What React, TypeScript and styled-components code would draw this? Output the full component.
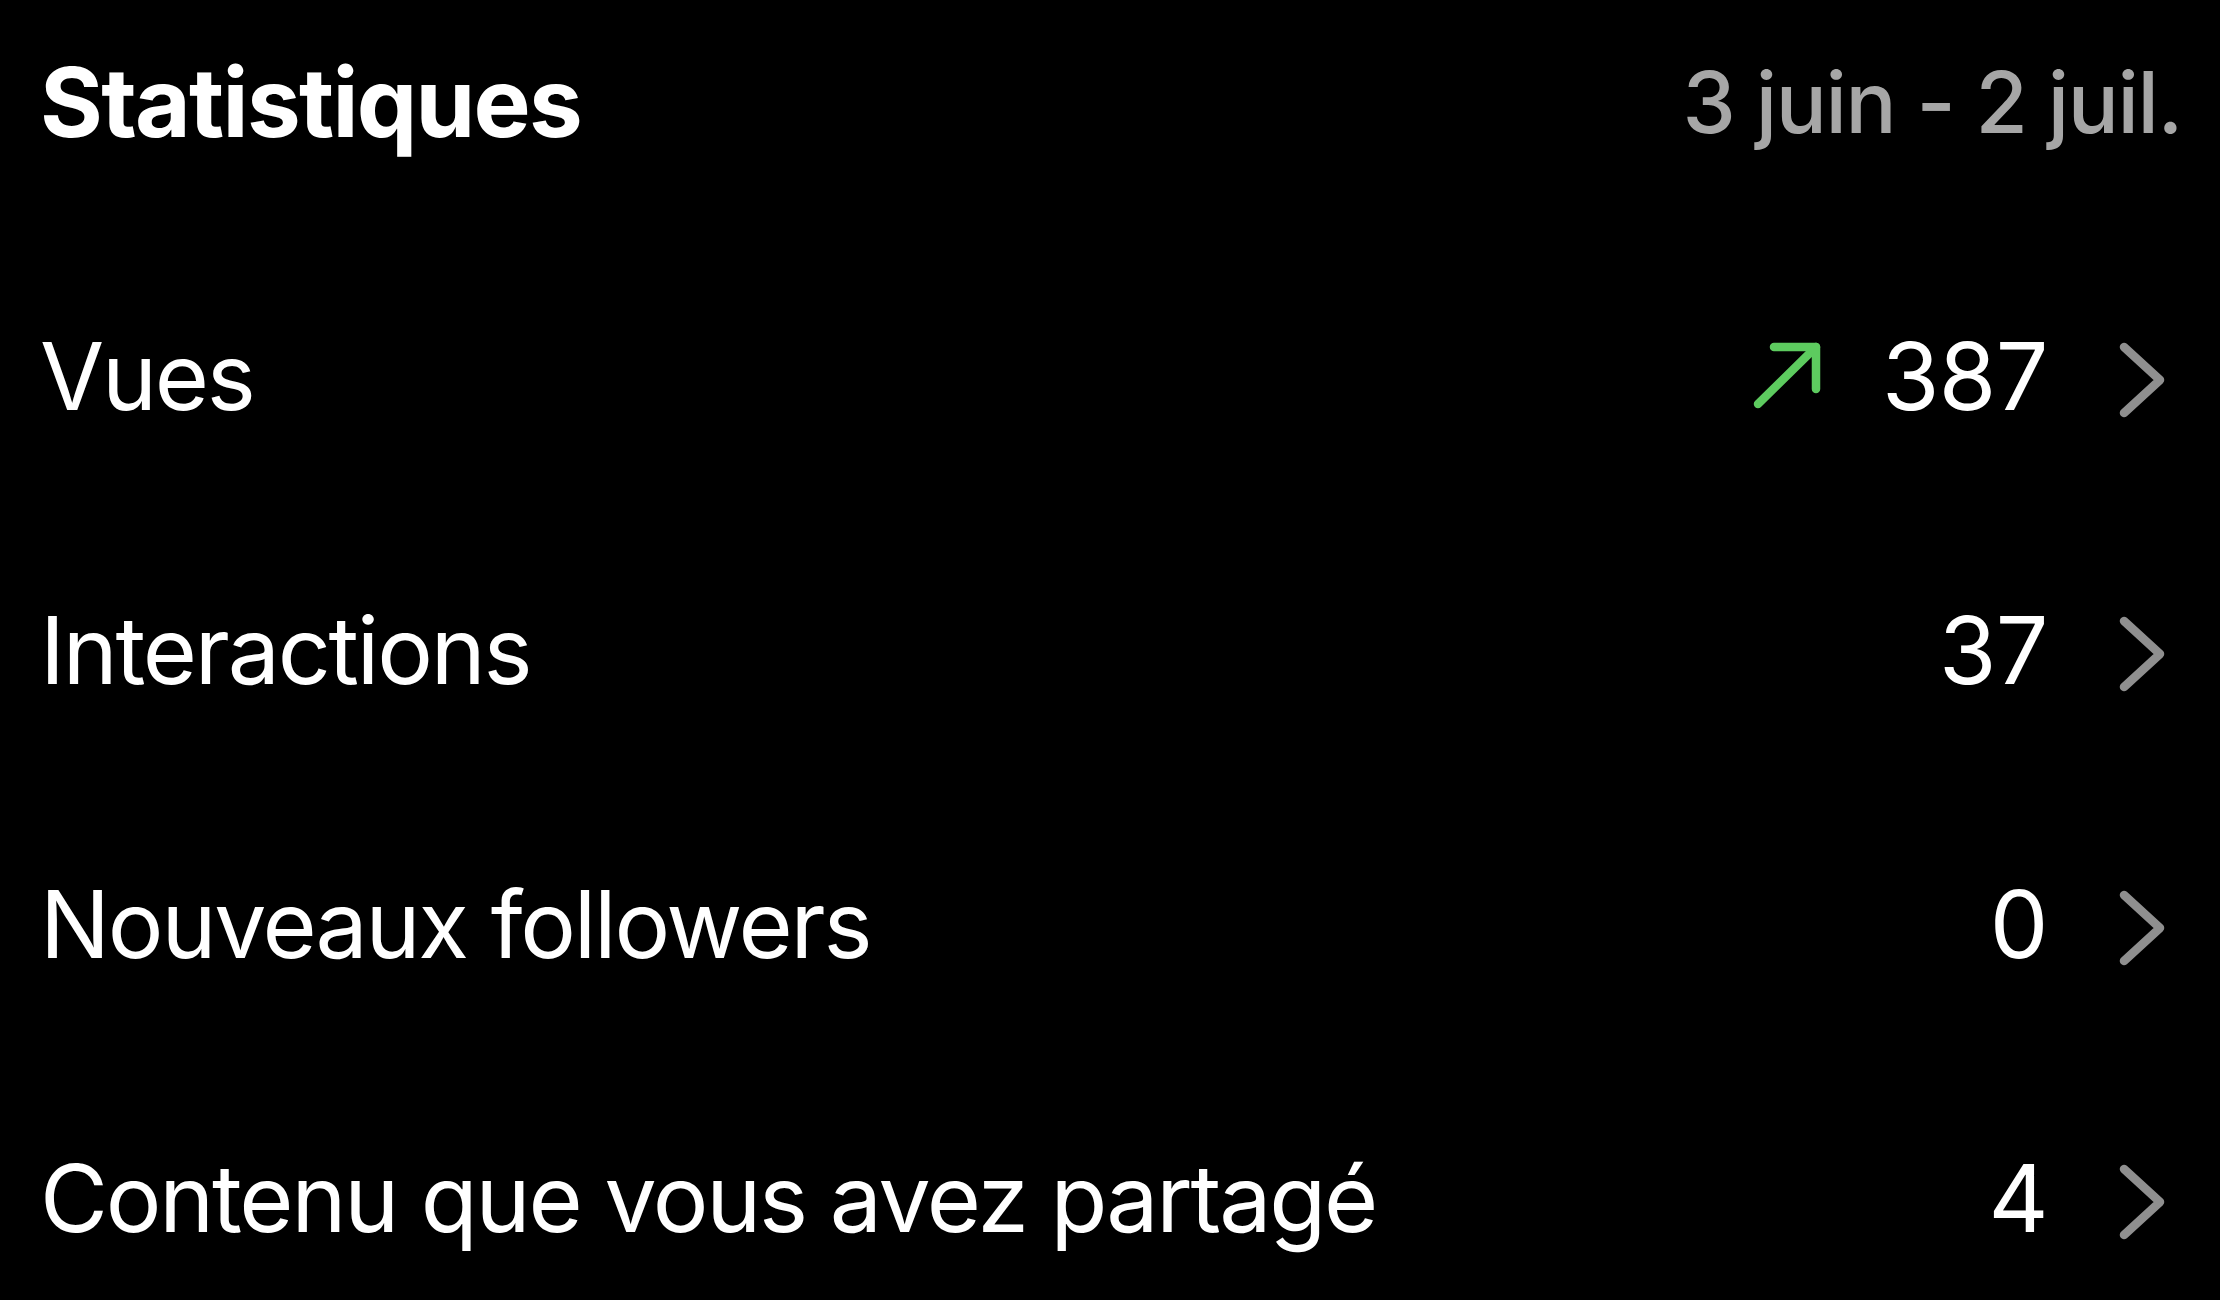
import React from "react";
import styled, { createGlobalStyle } from "styled-components";

const Global = createGlobalStyle`
  html, body {
    margin: 0;
    padding: 0;
    background: #000;
  }
  body {
    font-family: Inter, "Noto Sans", "Liberation Sans", sans-serif;
    color: #fff;
  }
`;

const Page = styled.div`
  width: 2220px;
  height: 1300px;
  background: #000;
  box-sizing: border-box;
  padding: 0 54px 0 40px;
  overflow: hidden;
`;

const Header = styled.div`
  height: 204px;
  display: flex;
  align-items: center;
  justify-content: space-between;
  margin-right: -16px;
  margin-bottom: 35px;
`;

const Title = styled.h1`
  margin: 0;
  font-size: 96px;
  line-height: 1;
  font-weight: 700;
  letter-spacing: -1.7px;
  color: #fff;
`;

const DateRange = styled.span`
  font-size: 85px;
  line-height: 1;
  font-weight: 500;
  letter-spacing: -1.4px;
  color: #a6a6a6;
`;

const List = styled.div`
  display: flex;
  flex-direction: column;
`;

const Row = styled.div`
  height: 274px;
  display: flex;
  align-items: center;
  justify-content: space-between;
`;

const Label = styled.span`
  font-size: 93px;
  line-height: 1;
  font-weight: 400;
  letter-spacing: -2.2px;
  color: #fff;
`;

const Right = styled.div`
  display: flex;
  align-items: center;
`;

const Value = styled.span`
  font-size: 93px;
  line-height: 1;
  font-weight: 400;
  letter-spacing: -0.5px;
  color: #fff;
  margin-right: 70px;
`;

const TrendIcon = styled.svg`
  width: 70px;
  height: 68px;
  margin-right: 60px;
  display: block;
`;

const Chevron = styled.svg`
  width: 48px;
  height: 76px;
  display: block;
  margin-top: 8px;
`;

const ArrowUp = () => (
  <TrendIcon viewBox="0 0 70 68">
    <g fill="none" stroke="#5dcb5f" strokeWidth="8.5" strokeLinecap="round" strokeLinejoin="round">
      <line x1="6" y1="62" x2="64" y2="5" />
      <polyline points="22,5 64,5 64,47" />
    </g>
  </TrendIcon>
);

const ChevronRight = () => (
  <Chevron viewBox="0 0 48 76">
    <polyline
      points="6,5 42,38 6,71"
      fill="none"
      stroke="#8f8f8f"
      strokeWidth="8.5"
      strokeLinecap="round"
      strokeLinejoin="round"
    />
  </Chevron>
);

type Stat = { label: string; value: string; trend?: boolean };

const stats: Stat[] = [
  { label: "Vues", value: "387", trend: true },
  { label: "Interactions", value: "37" },
  { label: "Nouveaux followers", value: "0" },
  { label: "Contenu que vous avez partagé", value: "4" },
];

export default function App() {
  return (
    <>
      <Global />
      <Page>
        <Header>
          <Title>Statistiques</Title>
          <DateRange>3 juin - 2 juil.</DateRange>
        </Header>
        <List>
          {stats.map((s) => (
            <Row key={s.label}>
              <Label>{s.label}</Label>
              <Right>
                {s.trend && <ArrowUp />}
                <Value>{s.value}</Value>
                <ChevronRight />
              </Right>
            </Row>
          ))}
        </List>
      </Page>
    </>
  );
}
